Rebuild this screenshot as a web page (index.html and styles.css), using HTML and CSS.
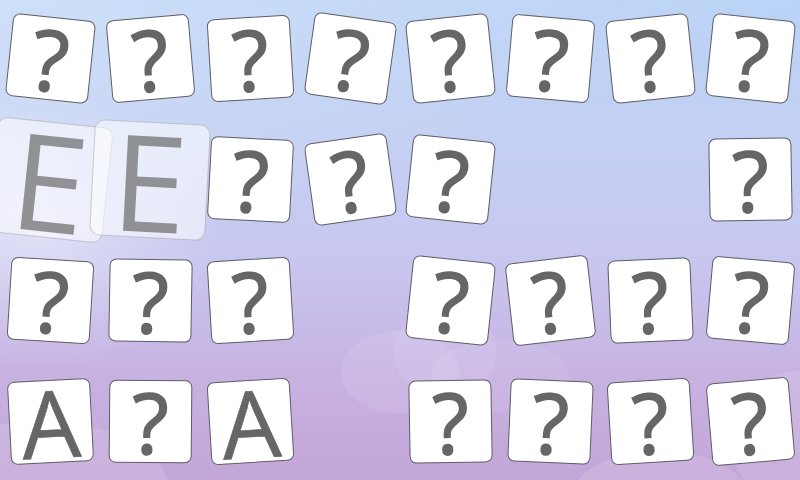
FILE: index.html
```html
<!DOCTYPE html>
<html lang="en">
<head>
<meta charset="utf-8">
<title>Memory</title>
<link rel="stylesheet" href="styles.css">
</head>
<body>
<main class="board">
  <div class="cell"><div class="card p6">?</div></div>
  <div class="cell"><div class="card m5">?</div></div>
  <div class="cell"><div class="card m3h">?</div></div>
  <div class="cell"><div class="card p8">?</div></div>
  <div class="cell"><div class="card m6">?</div></div>
  <div class="cell"><div class="card p5">?</div></div>
  <div class="cell"><div class="card m6">?</div></div>
  <div class="cell"><div class="card p6">?</div></div>

  <div class="cell"><div class="card big p6">E</div></div>
  <div class="cell"><div class="card big p3">E</div></div>
  <div class="cell"><div class="card p3">?</div></div>
  <div class="cell"><div class="card m8">?</div></div>
  <div class="cell"><div class="card p6">?</div></div>
  <div class="cell"></div>
  <div class="cell"></div>
  <div class="cell"><div class="card m1">?</div></div>

  <div class="cell"><div class="card p3h">?</div></div>
  <div class="cell"><div class="card p1">?</div></div>
  <div class="cell"><div class="card m3h">?</div></div>
  <div class="cell"></div>
  <div class="cell"><div class="card p6">?</div></div>
  <div class="cell"><div class="card m6h">?</div></div>
  <div class="cell"><div class="card m2h">?</div></div>
  <div class="cell"><div class="card p5">?</div></div>

  <div class="cell"><div class="card face m3">A</div></div>
  <div class="cell"><div class="card p0h">?</div></div>
  <div class="cell"><div class="card face m3h">A</div></div>
  <div class="cell"></div>
  <div class="cell"><div class="card m1">?</div></div>
  <div class="cell"><div class="card p2h">?</div></div>
  <div class="cell"><div class="card m3h">?</div></div>
  <div class="cell"><div class="card m5">?</div></div>
</main>
</body>
</html>
```

FILE: styles.css
```css
html, body {
  margin: 0;
  padding: 0;
}

body {
  width: 800px;
  height: 480px;
  overflow: hidden;
  font-family: "Open Sans", "DejaVu Sans", sans-serif;
}

.board {
  width: 800px;
  height: 480px;
  overflow: hidden;
  display: grid;
  grid-template-columns: repeat(8, 100px);
  grid-template-rows: repeat(4, 121px);
  align-content: center;
  background:
    radial-gradient(ellipse 60px 42px at 400px 372px, rgba(255,255,255,0.09) 98%, transparent 100%),
    radial-gradient(ellipse 52px 46px at 445px 352px, rgba(255,255,255,0.08) 98%, transparent 100%),
    radial-gradient(ellipse 70px 36px at 500px 376px, rgba(255,255,255,0.07) 98%, transparent 100%),
    radial-gradient(ellipse 90px 50px at 660px 500px, rgba(255,255,255,0.12) 98%, transparent 100%),
    radial-gradient(ellipse 70px 70px at 800px 440px, rgba(255,255,255,0.1) 98%, transparent 100%),
    radial-gradient(ellipse 130px 70px at 40px 490px, rgba(255,255,255,0.12) 98%, transparent 100%),
    radial-gradient(ellipse 260px 200px at 40px 230px, rgba(255,255,255,0.4), transparent 70%),
    linear-gradient(160deg, rgba(255,255,255,0.3) 0%, rgba(255,255,255,0) 40%),
    linear-gradient(to bottom, #b9d2f6 0%, #c4d0f3 30%, #c8c6ef 55%, #c7b2e2 78%, #c3a6d8 100%);
}

.cell {
  display: flex;
  align-items: center;
  justify-content: center;
}

.card {
  flex-shrink: 0;
  box-sizing: border-box;
  width: 83px;
  height: 83px;
  background: #ffffff;
  border: 1.5px solid #5d5d66;
  border-radius: 7px;
  display: flex;
  align-items: center;
  justify-content: center;
  font-size: 84px;
  font-weight: 400;
  line-height: 76px;
  color: #666666;
  -webkit-text-stroke: 1.6px #666666;
}

.card.face {
  font-size: 93px;
  line-height: 78px;
  -webkit-text-stroke: 0.6px #666666;
}

.card.big {
  width: 116px;
  height: 116px;
  background: rgba(255, 255, 255, 0.55);
  border-color: rgba(95, 95, 105, 0.3);
  border-radius: 10px;
  font-size: 134px;
  line-height: 110px;
  color: rgba(110, 110, 110, 0.72);
  -webkit-text-stroke: 0;
}

.p0h { transform: rotate(0.5deg); }
.p1  { transform: rotate(1deg); }
.p2h { transform: rotate(2.5deg); }
.p3  { transform: rotate(3deg); }
.p3h { transform: rotate(3.5deg); }
.p5  { transform: rotate(5deg); }
.p6  { transform: rotate(6deg); }
.p8  { transform: rotate(8deg); }
.m1  { transform: rotate(-1deg); }
.m2h { transform: rotate(-2.5deg); }
.m3  { transform: rotate(-3deg); }
.m3h { transform: rotate(-3.5deg); }
.m5  { transform: rotate(-5deg); }
.m6  { transform: rotate(-6deg); }
.m6h { transform: rotate(-6.5deg); }
.m8  { transform: rotate(-8deg); }
```
